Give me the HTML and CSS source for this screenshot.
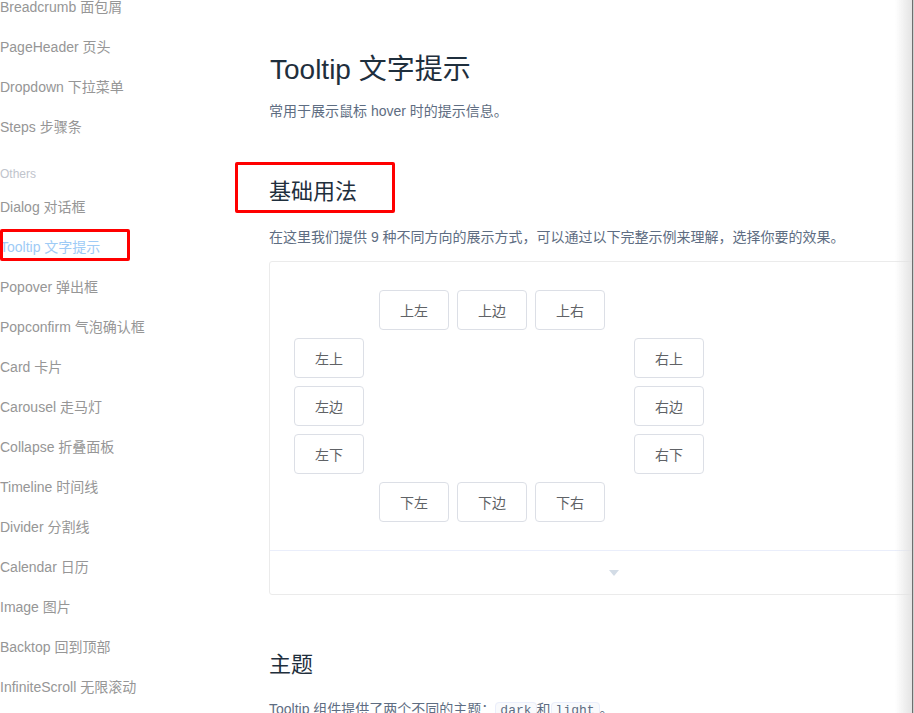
FILE: index.html
```html
<!DOCTYPE html>
<html lang="zh-CN">
<head>
<meta charset="utf-8">
<title>Tooltip 文字提示</title>
<link rel="stylesheet" href="styles.css">
</head>
<body>
<div class="page">
  <nav class="sidebar">
    <ul class="nav-list">
      <li class="nav-item">Breadcrumb 面包屑</li>
      <li class="nav-item">PageHeader 页头</li>
      <li class="nav-item">Dropdown 下拉菜单</li>
      <li class="nav-item">Steps 步骤条</li>
      <li class="nav-group">Others</li>
      <li class="nav-item">Dialog 对话框</li>
      <li class="nav-item active">Tooltip 文字提示</li>
      <li class="nav-item">Popover 弹出框</li>
      <li class="nav-item">Popconfirm 气泡确认框</li>
      <li class="nav-item">Card 卡片</li>
      <li class="nav-item">Carousel 走马灯</li>
      <li class="nav-item">Collapse 折叠面板</li>
      <li class="nav-item">Timeline 时间线</li>
      <li class="nav-item">Divider 分割线</li>
      <li class="nav-item">Calendar 日历</li>
      <li class="nav-item">Image 图片</li>
      <li class="nav-item">Backtop 回到顶部</li>
      <li class="nav-item">InfiniteScroll 无限滚动</li>
    </ul>
  </nav>
  <main class="main">
    <h1 class="title">Tooltip 文字提示</h1>
    <p class="lead">常用于展示鼠标 hover 时的提示信息。</p>

    <h2 class="section-title marked">基础用法</h2>
    <p class="text">在这里我们提供 9 种不同方向的展示方式，可以通过以下完整示例来理解，选择你要的效果。</p>

    <div class="demo-card">
      <div class="demo-body">
        <div class="box">
          <div class="row-center">
            <button class="btn">上左</button>
            <button class="btn">上边</button>
            <button class="btn">上右</button>
          </div>
          <div class="row-sides">
            <div class="col">
              <button class="btn">左上</button>
              <button class="btn">左边</button>
              <button class="btn">左下</button>
            </div>
            <div class="col">
              <button class="btn">右上</button>
              <button class="btn">右边</button>
              <button class="btn">右下</button>
            </div>
          </div>
          <div class="row-center">
            <button class="btn">下左</button>
            <button class="btn">下边</button>
            <button class="btn">下右</button>
          </div>
        </div>
      </div>
      <div class="demo-control">
        <span class="caret"></span>
      </div>
    </div>

    <h2 class="section-title theme-title">主题</h2>
    <p class="text theme-text">Tooltip 组件提供了两个不同的主题：<code class="code">dark</code>和<code class="code">light</code>。</p>
  </main>
</div>
<div class="edge-shadow"></div>
</body>
</html>
```

FILE: styles.css
```css
html, body {
  margin: 0;
  padding: 0;
  background: #ffffff;
  overflow: hidden;
  height: 713px;
}

body {
  font-family: "Liberation Sans", "Noto Sans CJK SC", Arial, sans-serif;
  font-size: 14px;
}

.page {
  display: flex;
  width: 1000px;
}

.sidebar {
  width: 230px;
  flex: none;
}

.nav-list {
  list-style: none;
  margin: -13px 0 0 0;
  padding: 0;
}

.nav-item {
  height: 40px;
  line-height: 40px;
  font-size: 14px;
  color: #969696;
  white-space: nowrap;
}

.nav-item.active {
  color: #9ecbf6;
  position: relative;
}

.nav-item.active::after {
  content: "";
  position: absolute;
  left: 0;
  top: 2px;
  width: 124px;
  height: 26px;
  border: 3px solid #ff0000;
  border-radius: 2px;
}

.nav-group {
  height: 40px;
  box-sizing: border-box;
  padding-top: 14px;
  line-height: 26px;
  font-size: 12px;
  color: #c0c4cc;
}

.main {
  flex: none;
  width: 690px;
  padding-left: 39px;
  padding-top: 50px;
}

.title {
  margin: 0 0 0 1px;
  font-size: 28px;
  line-height: 40px;
  font-weight: 400;
  color: #1f2f3d;
}

.lead {
  margin: 10px 0 0 0;
  line-height: 22px;
  color: #5e6d82;
}

.section-title {
  margin: 55px 0 0 0;
  font-size: 22px;
  line-height: 30px;
  font-weight: 400;
  color: #1f2f3d;
}

.marked {
  position: relative;
}

.marked::after {
  content: "";
  position: absolute;
  left: -34px;
  top: -15px;
  width: 154px;
  height: 45px;
  border: 3px solid #ff0000;
  border-radius: 2px;
}

.text {
  margin: 19px 0 0 0;
  line-height: 22px;
  color: #5e6d82;
}

.demo-card {
  margin-top: 13px;
  border: 1px solid #ebebeb;
  border-radius: 3px;
}

.demo-body {
  padding: 28px 24px 28px 24px;
  border-bottom: 1px solid #eaeefb;
}

.box {
  width: 410px;
  display: flex;
  flex-direction: column;
  gap: 8px;
}

.row-center {
  display: flex;
  gap: 8px;
  padding-left: 85px;
}

.row-sides {
  display: flex;
  justify-content: space-between;
}

.col {
  display: flex;
  flex-direction: column;
  gap: 8px;
}

.btn {
  width: 70px;
  height: 40px;
  padding: 0;
  margin: 0;
  border: 1px solid #dcdfe6;
  border-radius: 4px;
  background: #ffffff;
  color: #606266;
  font-family: "Liberation Sans", "Noto Sans CJK SC", Arial, sans-serif;
  font-size: 14px;
}

.demo-control {
  height: 43px;
  display: flex;
  align-items: center;
  justify-content: center;
}

.caret {
  width: 0;
  height: 0;
  border-left: 5px solid transparent;
  border-right: 5px solid transparent;
  border-top: 6px solid #d3dce6;
}

.theme-title {
  margin-top: 55px;
}

.theme-text {
  margin-top: 18px;
  color: #5e6d82;
}

.code {
  font-family: "Liberation Mono", "DejaVu Sans Mono", monospace;
  font-size: 13px;
  color: #5e6d82;
  background: #f9fafc;
  border: 1px solid #eaeefb;
  border-radius: 4px;
  padding: 0 4px;
}

.edge-shadow {
  position: fixed;
  top: 0;
  right: 0;
  width: 19px;
  height: 100%;
  background: linear-gradient(to right, rgba(255,255,255,0) 0, rgba(225,225,225,0.9) 17px, #6e6e6e 17px, #6e6e6e 18px, #cfcfcf 18px);
}
```
